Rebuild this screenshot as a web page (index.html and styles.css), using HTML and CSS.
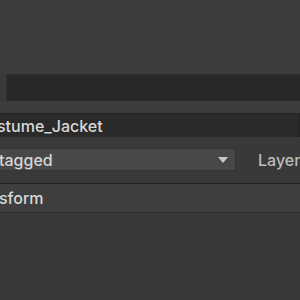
FILE: index.html
```html
<!DOCTYPE html>
<html lang="en">
<head>
    <meta charset="UTF-8">
    <title>Inspector</title>
    <link rel="stylesheet" href="styles.css">
</head>
<body>
    <div class="inspector">
        <div class="top-space"></div>
        <div class="search-bar"></div>
        <div class="header-band"></div>

        <div class="name-field">
            <span class="name-text">stume_Jacket</span>
        </div>

        <div class="tag-row">
            <div class="dropdown">
                <span class="dropdown-text">tagged</span>
                <svg class="arrow" width="10" height="6" viewBox="0 0 10 6">
                    <polygon points="0,0 10,0 5,6" fill="#c8c8c8"/>
                </svg>
            </div>
            <span class="layer-label">Layer</span>
        </div>

        <div class="component-header">
            <span class="component-title">sform</span>
        </div>
    </div>
</body>
</html>
```

FILE: styles.css
```css
body {
    margin: 0;
    padding: 0;
    background-color: #393939;
    font-family: Inter, "Noto Sans", sans-serif;
    font-weight: 500;
    color: #d2d2d2;
    overflow: hidden;
}

.inspector {
    width: 300px;
    height: 300px;
}

.top-space {
    height: 74px;
    background-color: #3c3c3c;
}

.search-bar {
    height: 26px;
    margin-left: 6px;
    background-color: #282828;
    border-top: 1px solid #2f2f2f;
    border-left: 1px solid #2e2e2e;
}

.header-band {
    height: 12px;
    background-color: #3c3c3c;
    border-bottom: 1px solid #232323;
}

.name-field {
    height: 23px;
    background-color: #2a2a2a;
    display: flex;
    align-items: center;
    border-right: 2px solid #262626;
    white-space: nowrap;
}

.name-text {
    font-size: 16px;
    margin-left: -3px;
    color: #d8d8d8;
}

.tag-row {
    display: flex;
    align-items: center;
    padding-top: 11px;
    height: 23px;
    background-color: #393939;
    white-space: nowrap;
}

.dropdown {
    width: 236px;
    flex-shrink: 0;
    height: 23px;
    box-sizing: border-box;
    background-color: #484848;
    border: 1px solid #333;
    border-left: none;
    border-radius: 0 3px 3px 0;
    display: flex;
    align-items: center;
    justify-content: space-between;
    padding-right: 7px;
}

.dropdown-text {
    font-size: 16px;
    margin-left: -1px;
    color: #d6d6d6;
}

.arrow {
    display: block;
}

.layer-label {
    margin-left: 22px;
    font-size: 16px;
    color: #bdbdbd;
}

.component-header {
    margin-top: 12px;
    height: 28px;
    background-color: #3e3e3e;
    border-top: 1px solid #232323;
    border-bottom: 1px solid #303030;
    display: flex;
    align-items: center;
}

.component-title {
    font-size: 16px;
    margin-left: -1px;
    color: #d8d8d8;
}
```
